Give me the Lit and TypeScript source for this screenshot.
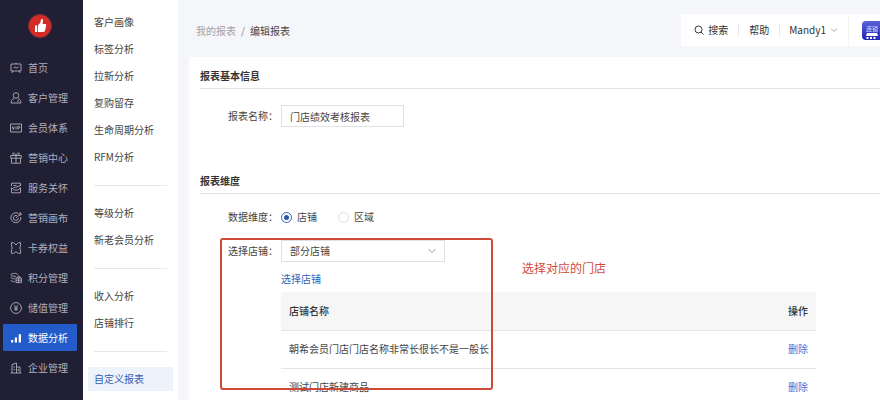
import { LitElement, html, css, svg } from "lit";
import { customElement, state } from "lit/decorators.js";
import { classMap } from "lit/directives/class-map.js";

const icons = {
  home: svg`<path d="M1 2h10v7H1zM3 9l-1 2M9 9l1 2M6 .5V2M3.5 6l1.500-1 1.500 1L8.500 5"/>`,
  user: svg`<circle cx="6" cy="3.500" r="2.800"/><path d="M4 6.500C2 7.200 1 8.800 1 11h10c0-2.200-1-3.800-3-4.500M7 9h2"/>`,
  vip: svg`<path d="M.5 2h11v8H.5zM2.300 4.500l1 3 1-3M6 4.500v3M7.800 7.500v-3h1.200a.8.800 0 0 1 0 1.700H7.800"/>`,
  gift: svg`<path d="M.7 3.500h10.600v2.700H.7zM1.500 6.200v5h9v-5M6 3.500v7.700M6 3.500C5 .5 2.500.2 2.800 2c.1.800.7 1.300 1.500 1.500M6 3.500C7 .5 9.500.2 9.200 2c-.1.800-.7 1.300-1.500 1.500"/>`,
  service: svg`<path d="M10.500 4V1.200h-9V4M1.500 5.800v5h9v-5M1.500 5.800 4.300 8h3.400l2.800-2.200M3.500 3.500h3M3.500 5.500h2l5-2"/>`,
  target: svg`<path d="M8 1.200A5 5 0 1 0 10.800 5M7 3.700A2.500 2.500 0 1 0 8.400 6M6 6.200l3-3M9 3.200V1.500L10.300.5v1.400h1.300l-1 1.300z"/>`,
  ticket: svg`<path d="M1.500.7h2.200L6 3 8.300.7h2.200v3.500L9.700 6l.8 1.800v3.500H8.300L6 9.500l-2.300 1.800H1.500V7.800L2.300 6l-.8-1.800z"/>`,
  coins: svg`<path d="M8 3.200C8 .8 1 .8 1 2.800s5 1 5 2.200M1 5.200c0 1.300 2 1.600 3.800 1.600M1 8c0 1.300 2 1.800 3.800 1.800M6 6h5.400v4.600H6zM6 8.200h5.400M7.500 6V4.700h2.500V6M8.700 6v4.600"/>`,
  yen: svg`<circle cx="6" cy="6" r="5.400"/><path d="M4.200 3.200 6 5.700l1.800-2.500M6 5.700V9M4.300 5.900h3.400M4.300 7.400h3.400"/>`,
  chart: svg`<path fill="currentColor" stroke="none" d="M1 8h2.200v2.500H1zM4.800 5.500H7v5H4.800zM8.700 2.300H11v8.200H8.700z"/>`,
  company: svg`<path d="M2 11V2.500L6.500 1v10M6.500 5H10v6M.7 11h10.600M3.500 5H5M3.500 7.500H5M8.300 7v2"/>`,
};

const modules: { icon: keyof typeof icons; label: string }[] = [
  { icon: "home", label: "首页" },
  { icon: "user", label: "客户管理" },
  { icon: "vip", label: "会员体系" },
  { icon: "gift", label: "营销中心" },
  { icon: "service", label: "服务关怀" },
  { icon: "target", label: "营销画布" },
  { icon: "ticket", label: "卡券权益" },
  { icon: "coins", label: "积分管理" },
  { icon: "yen", label: "储值管理" },
  { icon: "chart", label: "数据分析" },
  { icon: "company", label: "企业管理" },
];

const pageGroups = [
  ["客户画像", "标签分析", "拉新分析", "复购留存", "生命周期分析", "RFM分析"],
  ["等级分析", "新老会员分析"],
  ["收入分析", "店铺排行"],
  ["自定义报表"],
];

@customElement("side-nav")
class SideNav extends LitElement {
  static styles = css`
    :host { display: block; background: #211f33; }
    .logo { display: block; width: 24px; height: 24px; margin: 14px auto 16px 28px; }
    .list { display: flex; flex-direction: column; gap: 3px; padding: 0 6px 0 3px; }
    .item {
      display: flex; align-items: center; gap: 6px; height: 27px; padding-left: 7px;
      color: #b0afbb; text-decoration: none; border-radius: 1px; line-height: 14px; white-space: nowrap;
    }
    .item.active { background: #245bcb; color: #fff; }
    .icon { width: 12px; height: 12px; flex: none; fill: none; stroke: currentColor; stroke-width: 0.900; }
  `;
  render() {
    return html`
      <svg class="logo" viewBox="0 0 24 24" aria-hidden="true">
        <circle cx="12" cy="12" r="11.500" fill="#d42b26" stroke="#7d3036" />
        <path fill="#fff" d="M7 11.500h2.200V18H7zM10 11.300l2.300-2.500.7-3.200c.3-1 2-.7 2 .8L14.600 10h2.600c.8 0 1.200.7 1 1.400l-1.200 5.400c-.2.700-.7 1.200-1.500 1.200H10z" />
      </svg>
      <nav class="list">
        ${modules.map(
          (m) => html`<a href="#" class=${classMap({ item: true, active: m.label === "数据分析" })}>
            <svg class="icon" viewBox="0 0 12 12" aria-hidden="true">${icons[m.icon]}</svg>
            <span>${m.label}</span>
          </a>`
        )}
      </nav>
    `;
  }
}

@customElement("page-menu")
class PageMenu extends LitElement {
  static styles = css`
    :host { display: block; background: #fff; padding: 10px 5px 0; }
    .group { display: flex; flex-direction: column; gap: 3px; }
    .group + .group::before {
      content: ""; height: 1px; margin: 16px 6px 12px; background: #e6e7ea;
    }
    .item {
      display: block; height: 24px; line-height: 24px; padding-left: 6px;
      color: #444; text-decoration: none; white-space: nowrap;
    }
    .item.active { background: #edf2fb; color: #2f5fb3; }
  `;
  render() {
    return html`<nav>
      ${pageGroups.map(
        (group) => html`<div class="group">
          ${group.map(
            (label) => html`<a href="#" class=${classMap({ item: true, active: label === "自定义报表" })}>${label}</a>`
          )}
        </div>`
      )}
    </nav>`;
  }
}

@customElement("top-bar")
class TopBar extends LitElement {
  static styles = css`
    :host { display: flex; justify-content: space-between; align-items: center; height: 57px; }
    .crumbs { display: flex; gap: 5px; padding: 5px 0 0 7px; color: #444; }
    .crumbs a { color: #a2a3a6; text-decoration: none; }
    .slash { color: #85868a; }
    .tools { display: flex; align-items: center; height: 32px; margin-top: 3px; background: #fff; overflow: hidden; }
    .tool {
      display: flex; align-items: center; height: 12px; padding: 0 10px; border: 0;
      background: none; font: inherit; color: #333; white-space: nowrap;
    }
    .tool + .tool { border-left: 1px solid #e8e9ec; }
    .search { gap: 4px; padding-left: 13px; }
    .account { gap: 4px; padding-left: 9px; }
    .glass { width: 10px; height: 10px; fill: none; stroke: #333; }
    .arrow { width: 8px; height: 8px; fill: none; stroke: #aaa; }
    .app { display: flex; align-items: center; height: 32px; padding-left: 13px; border-left: 1px solid #f4f4f2; }
    .badge { width: 18px; height: 19px; }
  `;
  render() {
    return html`
      <nav class="crumbs"><a href="#">我的报表</a><span class="slash">/</span><span>编辑报表</span></nav>
      <div class="tools">
        <button class="tool search">
          <svg class="glass" viewBox="0 0 10 10" aria-hidden="true"><circle cx="4.500" cy="4.500" r="3.500" /><path d="m7 7 2.500 2.500" /></svg>
          搜索
        </button>
        <button class="tool">帮助</button>
        <button class="tool account">
          Mandy1
          <svg class="arrow" viewBox="0 0 8 8" aria-hidden="true"><path d="m1 2.500 3 3 3-3" /></svg>
        </button>
        <div class="app">
          <svg class="badge" viewBox="0 0 18 19" aria-hidden="true">
            <defs><linearGradient id="g" x2="0" y2="1"><stop stop-color="#5b62d6" /><stop offset="1" stop-color="#2326b5" /></linearGradient></defs>
            <path fill="url(#g)" d="M4 0h14v19H4a4 4 0 0 1-4-4V4a4 4 0 0 1 4-4z" />
            <text x="4" y="10" font-size="6" fill="#dfe1fb">连锁</text>
            <path fill="#fff" d="M5 12h10l1 3H4zM4.500 16h2v2h-2zM8 16h2v2H8zM11.500 16h2v2h-2z" />
          </svg>
        </div>
      </div>
    `;
  }
}

@customElement("report-form")
class ReportForm extends LitElement {
  @state() private scope = "店铺";
  private stores = ["朝希会员门店门店名称非常长很长不是一般长", "测试门店新建商品"];

  static styles = css`
    :host { display: block; background: #fff; padding: 11px 0 0 11px; color: #444; }
    .section + .section { margin-top: 46px; }
    .title {
      margin: 0; height: 20px; line-height: 16px; font-size: 10px; font-weight: 700; color: #333;
      border-bottom: 1px solid #dfe0e2;
    }
    .fields { position: relative; padding: 16px 0 0 28px; }
    .row { display: flex; align-items: center; min-height: 22px; }
    .label { flex: none; width: 53px; white-space: nowrap; }
    .control {
      box-sizing: border-box; height: 22px; padding: 0 8px; border: 1px solid #dfe0e2;
      border-radius: 0; background: #fff; font: inherit; color: #444; outline: none;
    }
    .name { width: 123px; }
    .picker { position: relative; width: 164px; }
    .picker .control { display: block; width: 100%; appearance: none; }
    .arrow { position: absolute; right: 9px; top: 7px; width: 8px; height: 8px; fill: none; stroke: #999; pointer-events: none; }
    .scope { margin: -4px 0 12px; }
    .choice { display: flex; align-items: center; gap: 5px; margin-right: 21px; }
    .radio {
      appearance: none; width: 11px; height: 11px; margin: 0; border: 1px solid #dcdde0;
      border-radius: 50%; display: grid; place-items: center;
    }
    .radio:checked { border-color: #2f62b8; }
    .radio:checked::before { content: ""; width: 5px; height: 5px; border-radius: 50%; background: #2456b0; }
    .detail { margin: 9px 64px 0 53px; }
    .link { color: #2f62b8; text-decoration: none; }
    .remove { color: #3f74d6; text-decoration: none; }
    .table { width: 100%; margin-top: 5px; border-collapse: collapse; table-layout: fixed; }
    .table th, .table td { box-sizing: border-box; height: 38px; padding: 0 8px; text-align: left; border-bottom: 1px solid #e4e5e7; }
    .table th { font-weight: 500; color: #333; background: #f6f6f7; }
    .table .action { width: 36px; white-space: nowrap; }
    .marker {
      position: absolute; left: 20px; top: 44px; box-sizing: border-box; width: 273px; height: 152px;
      border: 2px solid #cf4a36; border-radius: 3px; pointer-events: none;
    }
    .note { position: absolute; left: 322px; top: 64px; line-height: 20px; font-size: 12px; color: #d24a3e; white-space: nowrap; }
  `;

  render() {
    return html`
      <section class="section">
        <h2 class="title">报表基本信息</h2>
        <div class="fields">
          <div class="row">
            <label class="label" for="name">报表名称：</label>
            <input id="name" class="control name" type="text" value="门店绩效考核报表" />
          </div>
        </div>
      </section>
      <section class="section">
        <h2 class="title">报表维度</h2>
        <div class="fields">
          <div class="row scope" role="radiogroup" aria-labelledby="scope">
            <span class="label" id="scope">数据维度：</span>
            ${["店铺", "区域"].map(
              (s) => html`<label class="choice">
                <input class="radio" type="radio" name="scope" .checked=${this.scope === s} @change=${() => (this.scope = s)} />
                ${s}
              </label>`
            )}
          </div>
          <div class="row">
            <label class="label" for="stores">选择店铺：</label>
            <div class="picker">
              <select id="stores" class="control"><option>部分店铺</option></select>
              <svg class="arrow" viewBox="0 0 8 8" aria-hidden="true"><path d="m.5 2 3.500 3.500L7.500 2" /></svg>
            </div>
          </div>
          <div class="detail">
            <a class="link" href="#">选择店铺</a>
            <table class="table">
              <thead><tr><th>店铺名称</th><th class="action">操作</th></tr></thead>
              <tbody>
                ${this.stores.map(
                  (s) => html`<tr><td>${s}</td><td class="action"><a class="remove" href="#">删除</a></td></tr>`
                )}
              </tbody>
            </table>
          </div>
          <div class="marker"></div>
          <div class="note">选择对应的门店</div>
        </div>
      </section>
    `;
  }
}

@customElement("app-root")
class AppRoot extends LitElement {
  static styles = css`
    :host {
      display: grid; grid-template-columns: 83px 95px minmax(0, 1fr); height: 100vh; overflow: hidden;
      background: #f5f6f9; font: 10px/16px "Noto Sans CJK SC", sans-serif;
    }
    .main { padding-left: 11px; min-height: 0; }
  `;
  render() {
    return html`
      <side-nav></side-nav>
      <page-menu></page-menu>
      <main class="main">
        <top-bar></top-bar>
        <report-form></report-form>
      </main>
    `;
  }
}
